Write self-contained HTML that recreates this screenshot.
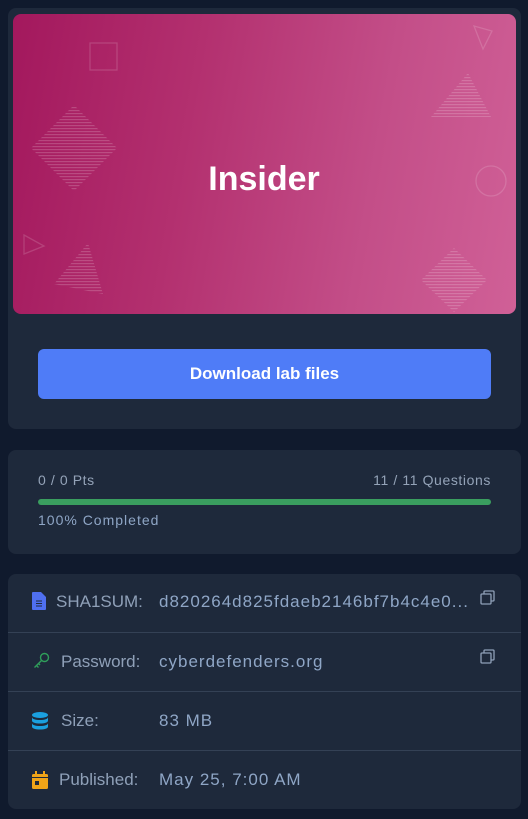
<!DOCTYPE html>
<html><head><style>
*{margin:0;padding:0;box-sizing:border-box}
body{width:528px;height:819px;background:#101a2d;font-family:"Liberation Sans",sans-serif;position:relative;overflow:hidden}
.card{position:absolute;left:8px;width:513px;background:#1e293b;border-radius:8px}
.img{position:absolute;left:13px;top:14px;width:503px;height:300px;border-radius:8px;background:linear-gradient(100deg,#a3185d 0%,#b3306f 35%,#c34e88 70%,#d06097 100%);overflow:hidden}
.btn{position:absolute;left:38px;top:349px;width:453px;height:50px;background:#4f7cf7;border-radius:6px;color:#fff;font-weight:bold;font-size:17px;text-align:center;line-height:50px}
.t{position:absolute;font-size:14px;color:#94a3b8;letter-spacing:0.6px}
.row{position:absolute;left:8px;width:513px;border-top:1px solid #344155}
.lbl{position:absolute;font-size:17px;color:#8fa0b8}
.val{position:absolute;left:159px;font-size:17px;color:#8fa6c6;letter-spacing:1px}
</style></head><body>
<div class="card" style="top:8px;height:421px"></div>
<div class="img">
<svg width="503" height="300" style="position:absolute;left:0;top:0">
<defs><pattern id="h" width="3" height="3" patternUnits="userSpaceOnUse"><rect width="3" height="1.2" fill="rgba(255,255,255,0.18)"/></pattern></defs>
<g fill="none" stroke="rgba(255,255,255,0.15)" stroke-width="1.3">
<rect x="77" y="29" width="27" height="27"/>
<circle cx="478" cy="167" r="15"/>
<polygon points="11,221 31,232 11,240"/>
<polygon points="461,12 479,17 470,35"/>
</g>
<polygon points="61,91 104,134 61,177 18,134" fill="url(#h)"/>
<polygon points="455,59 478,103 418,103" fill="url(#h)"/>
<polygon points="75,229 90,280 41,270" fill="url(#h)"/>
<polygon points="441,234 474,266 441,298 408,266" fill="url(#h)"/>
<text x="251" y="176" fill="#fff" font-family="Liberation Sans" font-weight="bold" font-size="34" text-anchor="middle">Insider</text>
</svg>
</div>
<div class="btn">Download lab files</div>

<div class="card" style="top:450px;height:104px"></div>
<div class="t" style="left:38px;top:472px">0 / 0 Pts</div>
<div class="t" style="right:37px;top:472px">11 / 11 Questions</div>
<div style="position:absolute;left:38px;top:499px;width:453px;height:6px;background:#3a9e5f;border-radius:3px"></div>
<div class="t" style="left:38px;top:512px;color:#8fa6c6;letter-spacing:1px">100% Completed</div>

<div class="card" style="top:574px;height:235px"></div>
<div class="row" style="top:632px"></div>
<div class="row" style="top:691px"></div>
<div class="row" style="top:750px"></div>

<svg style="position:absolute;left:32px;top:592px" width="14" height="18"><path d="M0 1a1 1 0 0 1 1-1h8l5 5v12a1 1 0 0 1-1 1H1a1 1 0 0 1-1-1z" fill="#4f6ff0"/><path d="M4 9h6M4 11.5h6M4 14h6" stroke="#1e293b" stroke-width="1"/></svg>
<div class="lbl" style="left:56px;top:592px">SHA1SUM:</div>
<div class="val" style="top:592px">d820264d825fdaeb2146bf7b4c4e0...</div>

<svg style="position:absolute;left:33px;top:652px" width="17" height="17" fill="none" stroke="#2f9e5a" stroke-width="1.4"><circle cx="11.5" cy="5.5" r="4"/><path d="M8.5 8.5L1.5 15.5M3.5 13.5l2 2M5.5 11.5l1.5 1.5"/></svg>
<div class="lbl" style="left:61px;top:652px">Password:</div>
<div class="val" style="top:652px">cyberdefenders.org</div>

<svg style="position:absolute;left:32px;top:712px" width="16" height="18" fill="#1aa0e0"><ellipse cx="8" cy="3" rx="8" ry="3"/><path d="M0 5c0 2 3.5 3 8 3s8-1 8-3v3.5c0 2-3.5 3-8 3S0 10.5 0 8.5z"/><path d="M0 11c0 2 3.5 3 8 3s8-1 8-3v3.5c0 2-3.5 3-8 3S0 16.5 0 14.5z"/></svg>
<div class="lbl" style="left:61px;top:711px">Size:</div>
<div class="val" style="top:711px">83 MB</div>

<svg style="position:absolute;left:32px;top:771px" width="16" height="18"><rect x="0" y="3" width="16" height="15" rx="1.5" fill="#f0a418"/><rect x="3" y="0" width="2" height="4" fill="#f0a418"/><rect x="11" y="0" width="2" height="4" fill="#f0a418"/><rect x="0" y="6" width="16" height="1" fill="#1e293b"/><rect x="3" y="10" width="4" height="4" fill="#1e293b"/></svg>
<div class="lbl" style="left:59px;top:770px">Published:</div>
<div class="val" style="top:770px">May 25, 7:00 AM</div>

<svg style="position:absolute;left:480px;top:590px" width="15" height="15" fill="none" stroke="#8fa0b8" stroke-width="1.3"><rect x="1" y="4" width="10" height="10" rx="1"/><path d="M4 4V2a1 1 0 0 1 1-1h8a1 1 0 0 1 1 1v8a1 1 0 0 1-1 1h-2"/></svg>
<svg style="position:absolute;left:480px;top:649px" width="15" height="15" fill="none" stroke="#8fa0b8" stroke-width="1.3"><rect x="1" y="4" width="10" height="10" rx="1"/><path d="M4 4V2a1 1 0 0 1 1-1h8a1 1 0 0 1 1 1v8a1 1 0 0 1-1 1h-2"/></svg>
</body></html>
